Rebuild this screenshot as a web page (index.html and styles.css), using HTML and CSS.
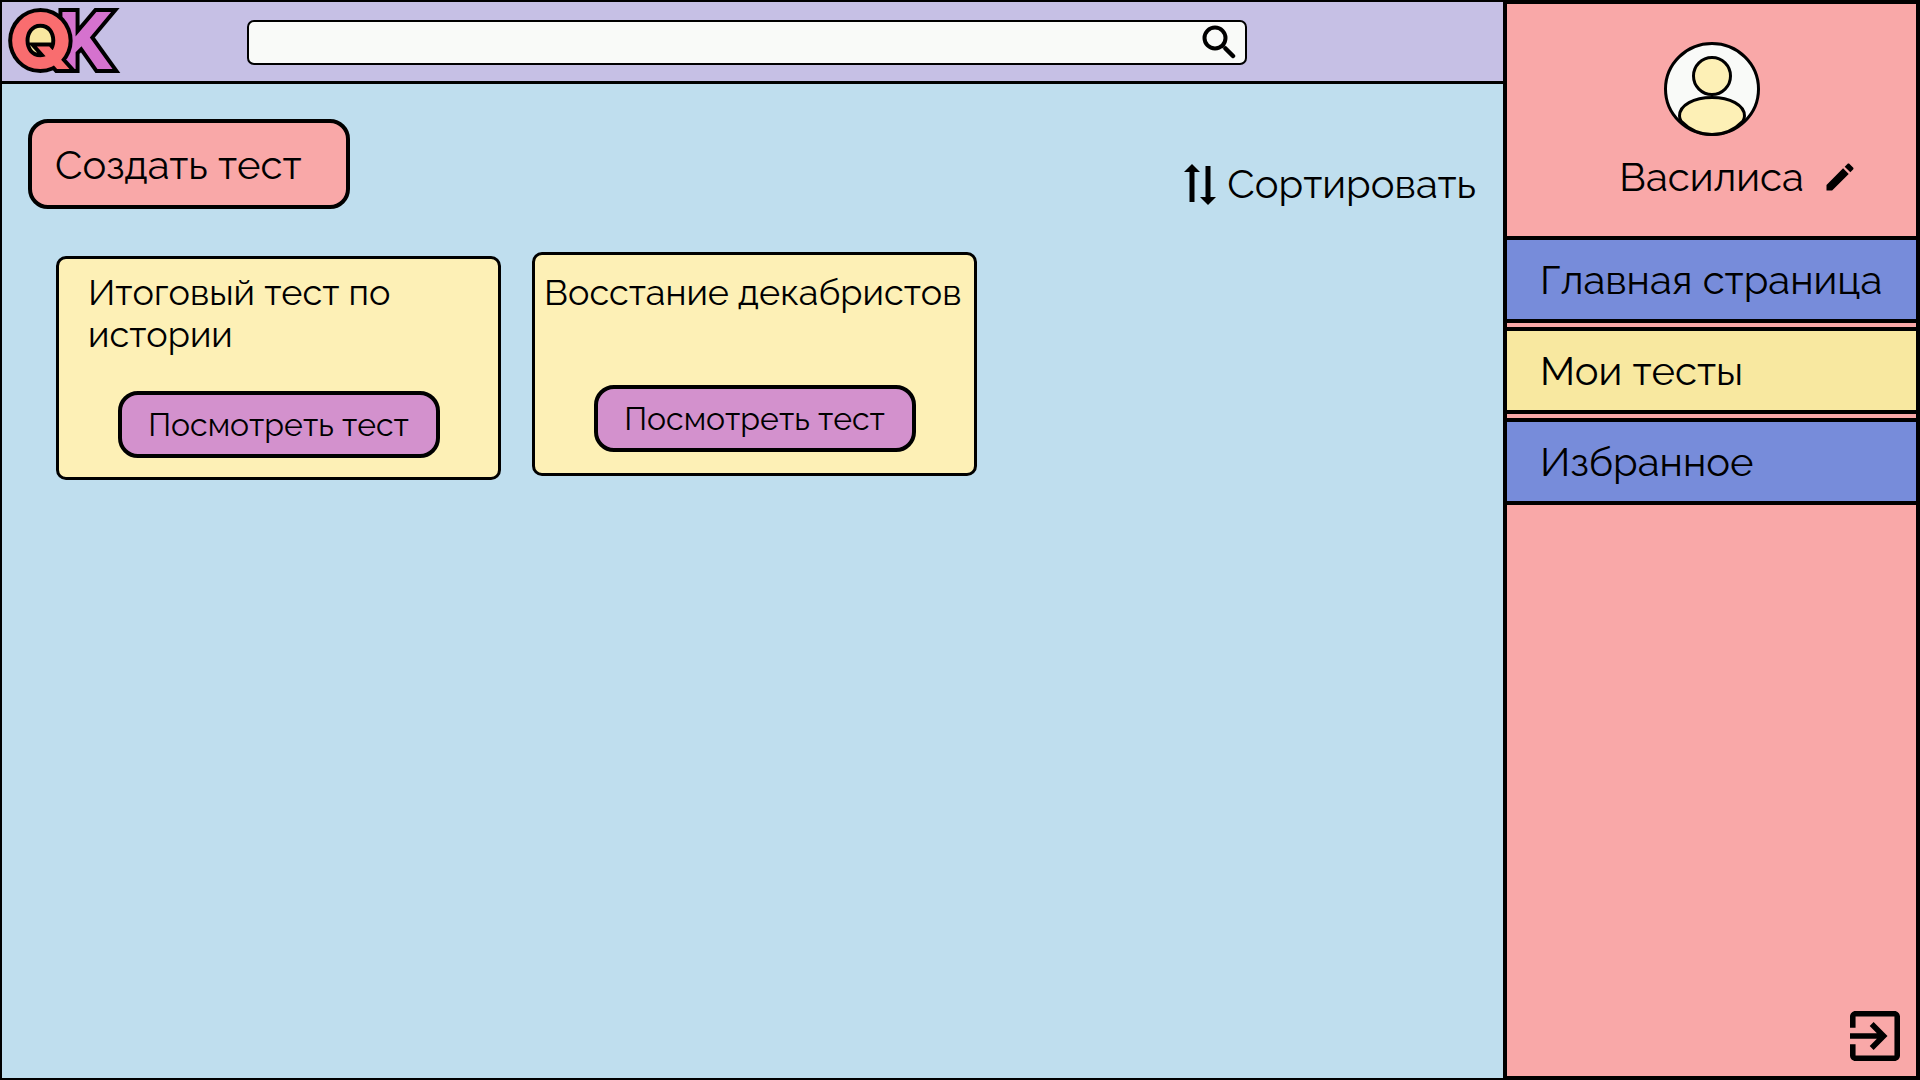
FILE: index.html
```html
<!DOCTYPE html>
<html lang="ru">
<head>
<meta charset="utf-8">
<meta name="viewport" content="width=device-width, initial-scale=1">
<title>Мои тесты</title>
<link rel="stylesheet" href="styles.css">
</head>
<body>
<div class="app">
  <div class="workspace">
    <header class="topbar">
      <a class="logo" href="#" aria-label="QK">
        <svg viewBox="0 0 120 73" width="120" height="73">
          <text class="logo-k" x="50" y="63">K</text>
          <ellipse class="logo-eye" cx="34" cy="34" rx="16" ry="18"/>
          <text class="logo-q" x="3" y="63">Q</text>
        </svg>
      </a>
      <form class="search" role="search">
        <input class="search-input" type="search" aria-label="Поиск">
        <button class="search-button" type="button" aria-label="Найти">
          <svg viewBox="0 0 34 36" width="34" height="36" fill="none" stroke="currentColor" stroke-width="4">
            <circle cx="13" cy="13" r="10.5"/>
            <path d="M20 20l2 2"/>
            <path d="M23.500 23.500l7.500 7.500" stroke-width="4.500" stroke-linecap="round"/>
          </svg>
        </button>
      </form>
    </header>

    <main class="content">
      <div class="toolbar">
        <button class="create-button" type="button">Создать тест</button>
        <button class="sort-button" type="button">
          <svg viewBox="0 0 32 42" width="32" height="42" fill="currentColor">
            <path d="M8 1l8 8h-5.500v30h-5V9H0z"/>
            <path d="M24 42l-8-8h5.500V3h5v31H32z"/>
          </svg>
          Сортировать
        </button>
      </div>

      <section class="cards">
        <article class="card">
          <h2 class="card-title">Итоговый тест по истории</h2>
          <button class="view-button" type="button">Посмотреть тест</button>
        </article>
        <article class="card card-long">
          <h2 class="card-title">Восстание декабристов</h2>
          <button class="view-button" type="button">Посмотреть тест</button>
        </article>
      </section>
    </main>
  </div>

  <aside class="sidebar">
    <div class="profile">
      <svg class="avatar" viewBox="0 0 96 94" width="96" height="94" stroke="#000" stroke-width="3">
        <ellipse cx="48" cy="47" rx="46.500" ry="45.500" fill="#f9faf8"/>
        <circle cx="48" cy="34" r="18.500" fill="#fdf0b6"/>
        <path d="M15.500 74C15.500 63 30 55.500 48 55.500S80.500 63 80.500 74Q80.500 76 79 79Q66 92.500 48 92.500T17 79Q15.500 76 15.500 74z" fill="#fdf0b6"/>
      </svg>
      <div class="profile-row">
        <span class="profile-name">Василиса</span>
        <button class="icon-button" type="button" aria-label="Редактировать">
          <svg viewBox="0 0 24 24" width="36" height="36" fill="currentColor">
            <path d="M3 17.250V21h3.750L17.810 9.940l-3.750-3.750L3 17.250zM20.710 7.040c.39-.39.39-1.020 0-1.410l-2.340-2.340c-.39-.39-1.020-.39-1.410 0l-1.830 1.830 3.750 3.750 1.830-1.830z"/>
          </svg>
        </button>
      </div>
    </div>
    <nav class="menu">
      <a class="menu-item" href="#">Главная страница</a>
      <a class="menu-item menu-item-active" href="#" aria-current="page">Мои тесты</a>
      <a class="menu-item" href="#">Избранное</a>
    </nav>
    <button class="icon-button exit-button" type="button" aria-label="Выйти">
      <svg viewBox="3 3 18 18" width="50" height="50" fill="currentColor">
        <path d="M10.090 15.590L11.500 17l5-5-5-5-1.410 1.410L12.670 11H3v2h9.670l-2.580 2.590zM19 3H5c-1.110 0-2 .9-2 2v4h2V5h14v14H5v-4H3v4c0 1.100.89 2 2 2h14c1.100 0 2-.9 2-2V5c0-1.100-.9-2-2-2z"/>
      </svg>
    </button>
  </aside>
</div>
</body>
</html>
```
FILE: styles.css
```css
* {
  box-sizing: border-box;
}

body {
  margin: 0;
  color: #000;
  font-family: "Raleway", "Inter", sans-serif;
  font-size: 40px;
  font-weight: 400;
}

button,
input {
  padding: 0;
  border: 0;
  background: none;
  color: inherit;
  font: inherit;
}

button {
  cursor: pointer;
}

svg {
  display: block;
}

.app {
  display: grid;
  grid-template-columns: minmax(0, 1fr) 417px;
  min-height: 100vh;
}

.workspace {
  display: flex;
  flex-direction: column;
  border: 2px solid #000;
  border-right: 0;
  background: #bfdeee;
}

/* Top bar */

.topbar {
  display: flex;
  align-items: center;
  gap: 120px;
  height: 82px;
  padding: 2px 24px 0 5px;
  border-bottom: 3px solid #000;
  background: #c6c0e5;
}

.logo {
  flex: none;
}

.logo svg {
  overflow: visible;
}

.logo text {
  font-size: 80px;
  font-weight: 800;
  paint-order: stroke;
  stroke: #000;
  stroke-width: 8px;
}

.logo-k {
  fill: #d572ce;
}

.logo-q {
  fill: #f96d6f;
}

.logo-eye {
  fill: #f8e8a0;
}

.search {
  display: flex;
  flex: 0 1 1000px;
  height: 45px;
  border: 2px solid #000;
  border-radius: 7px;
  background: #f9faf8;
}

.search-input {
  flex: 1;
  min-width: 0;
  padding: 0 12px;
  font-size: 32px;
  outline: 0;
}

.search-button {
  padding-right: 9px;
}

/* Content */

.content {
  padding: 35px 27px 32px 26px;
}

.toolbar {
  display: flex;
  align-items: flex-end;
  justify-content: space-between;
  margin-bottom: 43px;
}

.create-button {
  width: 322px;
  height: 90px;
  padding-left: 23px;
  border: 4px solid #000;
  border-radius: 20px;
  background: #f9a8a8;
  text-align: left;
}

.sort-button {
  display: flex;
  align-items: center;
  gap: 11px;
  line-height: 50px;
}

.cards {
  display: flex;
  flex-wrap: wrap;
  align-items: baseline;
  gap: 31px;
  padding-left: 28px;
}

.card {
  display: flex;
  flex-direction: column;
  align-items: center;
  justify-content: space-between;
  width: 445px;
  height: 224px;
  padding: 12px 29px 19px;
  border: 3px solid #000;
  border-radius: 10px;
  background: #fdf0b6;
}

.card-long {
  padding: 16px 9px 21px;
}

.card-title {
  align-self: stretch;
  margin: 0;
  font-size: 36px;
  font-weight: 400;
  line-height: 42px;
}

.view-button {
  width: 322px;
  height: 67px;
  border: 4px solid #000;
  border-radius: 20px;
  background: #d391cd;
  font-size: 32px;
}

/* Sidebar */

.sidebar {
  display: flex;
  flex-direction: column;
  border: 4px solid #000;
  background: #f9a8a8;
}

.profile {
  display: flex;
  flex-direction: column;
  align-items: center;
  gap: 17px;
  padding: 38px 0 35px;
}

.profile-row {
  display: grid;
  grid-template-columns: 1fr auto 1fr;
  align-items: center;
  gap: 18px;
  width: 100%;
}

.profile-name {
  grid-column: 2;
  line-height: 48px;
}

.icon-button {
  justify-self: start;
}

.menu {
  display: flex;
  flex-direction: column;
  gap: 4px;
}

.menu-item {
  padding: 0 24px 0 33px;
  border: solid #000;
  border-width: 4px 0;
  background: #778cda;
  color: inherit;
  line-height: 79px;
  text-decoration: none;
}

.menu-item-active {
  background: #f8e8a0;
}

.exit-button {
  align-self: flex-end;
  margin: auto 16px 15px;
}
```
